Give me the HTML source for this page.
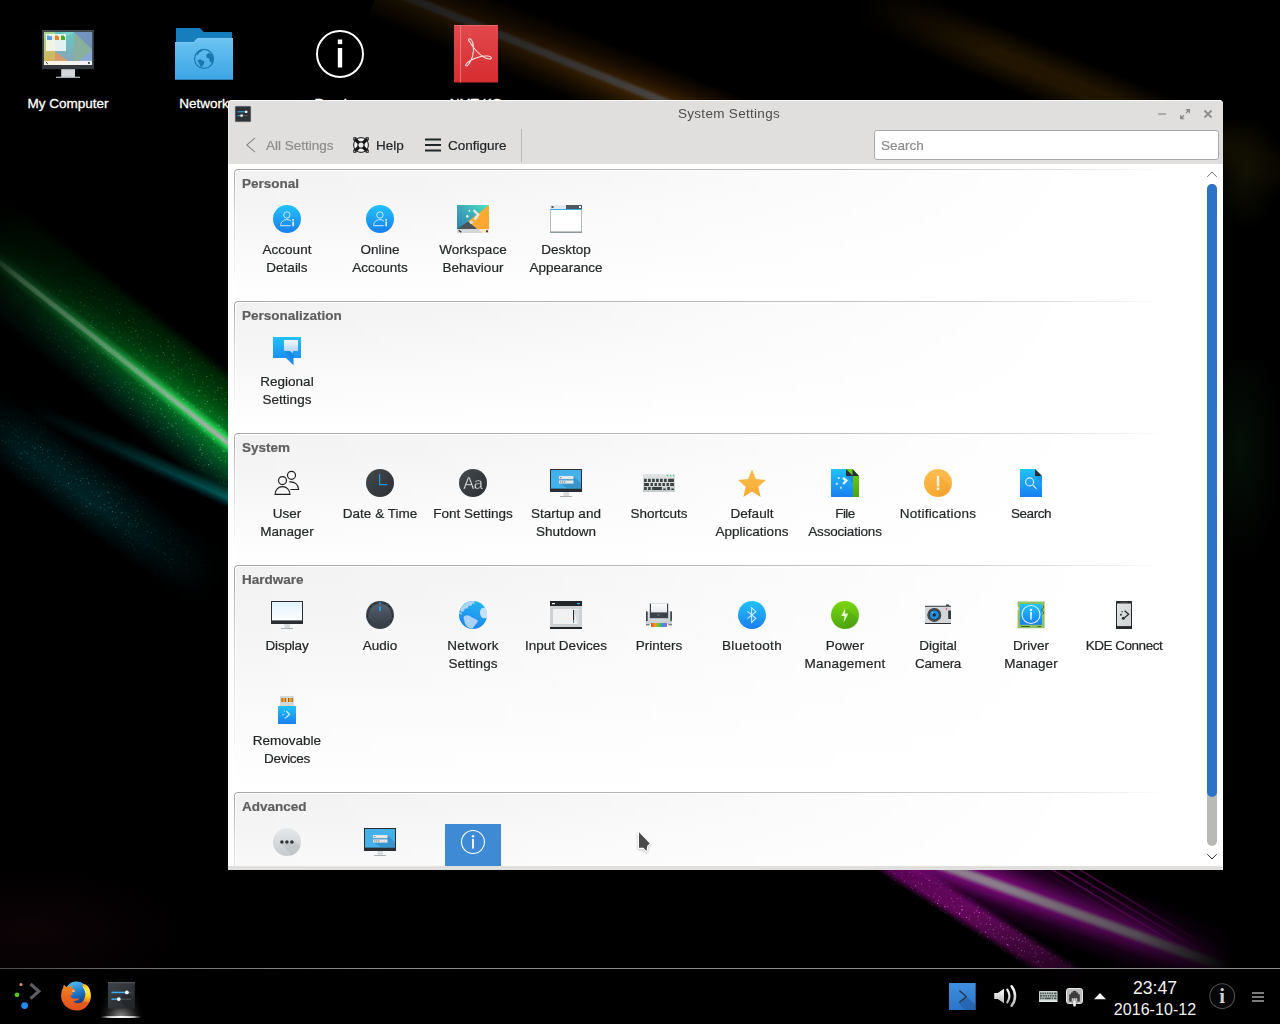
<!DOCTYPE html>
<html lang="en">
<head>
<meta charset="utf-8">
<title>System Settings</title>
<style>
*{box-sizing:border-box;margin:0;padding:0}
html,body{width:1280px;height:1024px;overflow:hidden;background:#000}
body{position:relative;font-family:"Liberation Sans",sans-serif;font-size:13.5px;color:#232627;-webkit-text-stroke:.2px}
.abs{position:absolute}
svg{display:block;overflow:visible}
#wall{position:absolute;left:0;top:0;width:1280px;height:1024px;overflow:hidden;background:#000}
.stk{position:absolute;transform-origin:0 50%}
/* desktop icons */
.dlabel{position:absolute;width:140px;text-align:center;color:#fff;font-size:13.5px;line-height:18px;text-shadow:0 1px 2px #000,0 0 3px #000;white-space:nowrap;-webkit-text-stroke:.3px #fff}
.dicon{position:absolute}
/* window */
#win{will-change:transform;position:absolute;left:228px;top:100px;width:995px;height:770px;background:#fff;border-radius:4px 4px 0 0;overflow:hidden}
#chrome{position:absolute;left:0;top:0;width:995px;height:64px;background:#e0dfde;border-radius:4px 4px 0 0;box-shadow:inset 0 1px 0 #fafafa,inset 1px 0 0 #ececeb}
#title{position:absolute;left:0;top:5px;width:1002px;text-align:center;font-size:13.5px;line-height:18px;color:#4d4d4d;letter-spacing:.3px;-webkit-text-stroke:0}
.tb{position:absolute;top:37px;font-size:13.5px;line-height:18px;color:#232627;white-space:nowrap}
#search{position:absolute;left:646px;top:30px;width:345px;height:30px;background:#fff;border:1px solid #a9a8a7;border-radius:3px;font-size:13.5px;line-height:30px;padding-left:6px;color:#8b8b8b}
#content{position:absolute;left:1px;top:64px;width:993px;height:702px;background:#fff;overflow:hidden}
#bot{position:absolute;left:0;top:766px;width:994px;height:4px;background:#e0dfde}
.grp{position:absolute;left:5px;width:968px}
.grp i{position:absolute;left:2px;top:2px;right:0;bottom:0;border-radius:2px 0 0 0;background:linear-gradient(180deg,#f1f1f1 0,#f7f7f7 45%,#fff 100%);-webkit-mask-image:linear-gradient(100deg,#000 0,rgba(0,0,0,.72) 28%,rgba(0,0,0,.3) 58%,transparent 86%);mask-image:linear-gradient(100deg,#000 0,rgba(0,0,0,.72) 28%,rgba(0,0,0,.3) 58%,transparent 86%)}
.grp:before{content:"";position:absolute;left:0;top:0;right:0;bottom:0;border-radius:4px 4px 0 0;border:1px solid #a6a6a6;border-bottom:0;border-right:0;-webkit-mask-image:linear-gradient(180deg,#000 0,rgba(0,0,0,.5) 35%,transparent 90%),linear-gradient(90deg,#000 0,#000 40%,transparent 96%);-webkit-mask-composite:source-in;mask-image:linear-gradient(180deg,#000 0,rgba(0,0,0,.5) 35%,transparent 90%),linear-gradient(90deg,#000 0,#000 40%,transparent 96%);mask-composite:intersect}
.grp:after{content:"";position:absolute;left:3px;top:0;right:0;height:1px;background:linear-gradient(90deg,#a6a6a6 0,#b2b2b2 30%,rgba(190,190,190,.75) 60%,rgba(200,200,200,0) 97%)}
.grp h3{position:absolute;left:8px;top:6px;font-size:13.5px;line-height:18px;font-weight:bold;color:#5f5f5f;white-space:nowrap}
.it{position:absolute;width:110px;height:80px;text-align:center;font-size:13.5px;line-height:18px;color:#232627}
.it svg{position:absolute;left:39px;top:0;width:32px;height:32px}
.it b{font-weight:normal}
.it span{position:absolute;left:0;top:38px;width:110px;display:block}
.it.sel:before{content:"";position:absolute;left:27px;top:-2px;width:56px;height:60px;background:#3f8ad5}
/* panel */
#panel{position:absolute;left:0;top:968px;width:1280px;height:56px;background:rgba(0,0,0,.92);border-top:1px solid transparent}
#panel:before{content:"";position:absolute;left:0;top:-1px;width:1280px;height:1px;background:linear-gradient(90deg,#4a4a4a 0,#6e6e6e 10%,#8c8c8c 30%,#8e8e8e 100%)}
</style>
</head>
<body>
<svg width="0" height="0" style="position:absolute"><defs>
<linearGradient id="gBlue" x1="0" y1="0" x2="0" y2="1"><stop offset="0" stop-color="#21c2f9"/><stop offset="1" stop-color="#1a7ff0"/></linearGradient>
<linearGradient id="gPale" x1="0" y1="0" x2="0" y2="1"><stop offset="0" stop-color="#f4f9ff"/><stop offset="1" stop-color="#a9cdf8"/></linearGradient>
<linearGradient id="gDark" x1="0" y1="0" x2="1" y2="1"><stop offset="0" stop-color="#454a4f"/><stop offset="1" stop-color="#2b2f33"/></linearGradient>
<linearGradient id="gOrange" x1="0" y1="0" x2="0" y2="1"><stop offset="0" stop-color="#fdbe52"/><stop offset="1" stop-color="#f9a830"/></linearGradient>
<linearGradient id="gOr2" x1="0" y1="0" x2="1" y2="1"><stop offset="0" stop-color="#fbb13a"/><stop offset="1" stop-color="#fda52c"/></linearGradient>
<linearGradient id="gTeal" x1="0" y1="1" x2="1" y2="0"><stop offset="0" stop-color="#2f7fb4"/><stop offset=".5" stop-color="#3fa9b8"/><stop offset="1" stop-color="#49e6c4"/></linearGradient>
<linearGradient id="gGreen" x1="0" y1="0" x2="0" y2="1"><stop offset="0" stop-color="#7bd80e"/><stop offset="1" stop-color="#4ea611"/></linearGradient>
<linearGradient id="gGreen2" x1="0" y1="0" x2="0" y2="1"><stop offset="0" stop-color="#72d20d"/><stop offset="1" stop-color="#48a611"/></linearGradient>
<linearGradient id="gGray" x1="0" y1="0" x2="0" y2="1"><stop offset="0" stop-color="#e6e9ea"/><stop offset="1" stop-color="#c6cbce"/></linearGradient>
<linearGradient id="gKb" x1="0" y1="0" x2="0" y2="1"><stop offset="0" stop-color="#e3e6e7"/><stop offset="1" stop-color="#c3c9cb"/></linearGradient>
<linearGradient id="gScreen" x1="0" y1="0" x2="0" y2="1"><stop offset="0" stop-color="#e3f3fc"/><stop offset="1" stop-color="#fdfeff"/></linearGradient>
<linearGradient id="gKnob" x1="0" y1="0" x2="0" y2="1"><stop offset="0" stop-color="#56606b"/><stop offset="1" stop-color="#353c44"/></linearGradient>
<linearGradient id="gGlobe" x1="0.7" y1="0" x2="0.3" y2="1"><stop offset="0" stop-color="#23b4ef"/><stop offset="1" stop-color="#1b83f0"/></linearGradient>
<linearGradient id="gPaper" x1="0" y1="0" x2="0" y2="1"><stop offset="0" stop-color="#fff"/><stop offset="1" stop-color="#e4e9ed"/></linearGradient>
<linearGradient id="gPhone" x1="0" y1="0" x2="1" y2="1"><stop offset="0" stop-color="#e2e4e5"/><stop offset="1" stop-color="#cfd2d3"/></linearGradient>
<linearGradient id="gRainbow" x1="0" y1="0" x2="1" y2="0"><stop offset="0" stop-color="#e8452c"/><stop offset=".25" stop-color="#f0a020"/><stop offset=".5" stop-color="#5ac43a"/><stop offset=".75" stop-color="#3d8fe0"/><stop offset="1" stop-color="#a15fd0"/></linearGradient>
<linearGradient id="gFolder" x1="0" y1="0" x2="0" y2="1"><stop offset="0" stop-color="#6cc4f2"/><stop offset="1" stop-color="#3da5e4"/></linearGradient>
<linearGradient id="gRed" x1="0" y1="0" x2="0" y2="1"><stop offset="0" stop-color="#e2494c"/><stop offset="1" stop-color="#d62c30"/></linearGradient>
<filter id="spk" x="0" y="0" width="100%" height="100%" color-interpolation-filters="sRGB"><feTurbulence type="fractalNoise" baseFrequency=".75" numOctaves="1" seed="7" result="n"/><feColorMatrix in="n" type="matrix" values="0 0 0 0 1 0 0 0 0 1 0 0 0 0 1 11 0 0 0 -7.3" result="d"/><feComposite in="SourceGraphic" in2="d" operator="in"/></filter>
</defs></svg>
<div id="wall">
<!-- green -->
<div class="stk" style="left:-60px;top:135px;width:420px;height:160px;transform:rotate(38.3deg);background:linear-gradient(180deg,rgba(0,40,5,0) 14%,rgba(0,72,12,.55) 20%,rgba(0,98,20,.74) 34%,rgba(4,135,34,.86) 44%,rgba(40,225,90,1) 48.4%,rgba(40,225,90,1) 51.6%,rgba(4,135,44,.86) 56%,rgba(0,98,48,.7) 65%,rgba(0,70,46,.45) 73%,rgba(0,40,30,0) 81%);-webkit-mask-image:linear-gradient(90deg,transparent 8%,rgba(0,0,0,.16) 18%,rgba(0,0,0,.32) 33%,rgba(0,0,0,.55) 50%,rgba(0,0,0,.85) 70%,#000 87%);mask-image:linear-gradient(90deg,transparent 8%,rgba(0,0,0,.16) 18%,rgba(0,0,0,.32) 33%,rgba(0,0,0,.55) 50%,rgba(0,0,0,.85) 70%,#000 87%)"></div>
<div class="stk" style="left:-60px;top:211.5px;width:420px;height:7px;transform:rotate(38.3deg);background:linear-gradient(180deg,rgba(150,160,150,0),#9aa59a 28%,#a8b3a8 50%,#9aa59a 72%,rgba(150,160,150,0));-webkit-mask-image:linear-gradient(90deg,transparent 14%,rgba(0,0,0,.28) 24%,rgba(0,0,0,.5) 55%,#000 87%);mask-image:linear-gradient(90deg,transparent 14%,rgba(0,0,0,.28) 24%,rgba(0,0,0,.5) 55%,#000 87%)"></div>
<div class="stk spk-green" style="left:-60px;top:135px;width:420px;height:160px;transform:rotate(38.3deg);filter:url(#spk);background:linear-gradient(180deg,rgba(60,220,110,0) 16%,rgba(70,230,120,.75) 26%,rgba(110,255,150,.9) 50%,rgba(70,230,150,.75) 68%,rgba(60,220,140,0) 79%);-webkit-mask-image:linear-gradient(90deg,transparent 16%,rgba(0,0,0,.12) 30%,rgba(0,0,0,.45) 52%,#000 88%);mask-image:linear-gradient(90deg,transparent 16%,rgba(0,0,0,.12) 30%,rgba(0,0,0,.45) 52%,#000 88%)"></div>
<!-- thin teal -->
<div class="stk" style="left:10px;top:390px;width:300px;height:20px;transform:rotate(24deg);background:linear-gradient(180deg,rgba(0,60,60,0),rgba(0,85,82,.7) 30%,rgba(0,105,105,.85) 55%,rgba(0,70,80,.5) 80%,rgba(0,60,70,0));-webkit-mask-image:linear-gradient(90deg,transparent 5%,rgba(0,0,0,.3) 35%,#000 80%);mask-image:linear-gradient(90deg,transparent 5%,rgba(0,0,0,.3) 35%,#000 80%)"></div>
<!-- broad teal -->
<div class="stk" style="left:-40px;top:366px;width:330px;height:66px;transform:rotate(36deg);background:linear-gradient(180deg,rgba(0,50,55,0),rgba(0,58,62,.5) 40%,rgba(0,64,70,.55) 60%,rgba(0,50,60,0));-webkit-mask-image:linear-gradient(90deg,transparent 3%,rgba(0,0,0,.8) 25%,#000 50%,transparent 96%);mask-image:linear-gradient(90deg,transparent 3%,rgba(0,0,0,.8) 25%,#000 50%,transparent 96%)"></div>
<div class="stk" style="left:-40px;top:366px;width:330px;height:66px;transform:rotate(36deg);filter:url(#spk);background:linear-gradient(180deg,rgba(0,150,150,0),rgba(40,170,170,.7) 40%,rgba(40,170,175,.7) 60%,rgba(0,150,150,0));-webkit-mask-image:linear-gradient(90deg,transparent 3%,rgba(0,0,0,.8) 25%,#000 50%,transparent 96%);mask-image:linear-gradient(90deg,transparent 3%,rgba(0,0,0,.8) 25%,#000 50%,transparent 96%)"></div>
<!-- orange 1 -->
<div class="stk" style="left:380px;top:-51px;width:440px;height:74px;transform:rotate(22.1deg);background:linear-gradient(180deg,rgba(90,45,0,0) 4%,rgba(80,40,4,.38) 26%,rgba(100,55,6,.6) 42%,rgba(90,85,80,.9) 47.5%,rgba(90,85,80,.9) 53%,rgba(108,64,6,.62) 58%,rgba(90,50,4,.38) 76%,rgba(90,50,0,0) 96%);-webkit-mask-image:linear-gradient(90deg,rgba(0,0,0,.35) 0,rgba(0,0,0,.55) 35%,#000 80%);mask-image:linear-gradient(90deg,rgba(0,0,0,.35) 0,rgba(0,0,0,.55) 35%,#000 80%)"></div>
<!-- orange 2 -->
<div class="stk" style="left:850px;top:-34px;width:520px;height:56px;transform:rotate(22.4deg);background:linear-gradient(180deg,rgba(90,55,0,0),rgba(80,50,4,.42) 40%,rgba(80,50,4,.42) 60%,rgba(90,55,0,0));-webkit-mask-image:linear-gradient(90deg,transparent 2%,#000 30%,#000 55%,rgba(0,0,0,.3) 85%);mask-image:linear-gradient(90deg,transparent 2%,#000 30%,#000 55%,rgba(0,0,0,.3) 85%)"></div>
<!-- right dim glows -->
<div class="abs" style="left:1223px;top:120px;width:57px;height:110px;background:radial-gradient(ellipse at 40% 45%,rgba(20,19,3,.9),rgba(20,18,0,0) 70%)"></div>
<div class="abs" style="left:1223px;top:360px;width:57px;height:200px;background:radial-gradient(ellipse at 30% 45%,rgba(6,16,8,.95),rgba(5,15,8,0) 75%)"></div>
<div class="abs" style="left:-60px;top:860px;width:260px;height:130px;background:radial-gradient(ellipse at 35% 55%,rgba(20,4,8,.6),rgba(10,0,4,0) 70%)"></div>
<!-- magenta left band -->
<div class="stk" style="left:864px;top:830px;width:300px;height:30px;transform:rotate(32.7deg);background:linear-gradient(180deg,rgba(110,0,100,0),rgba(120,12,110,.9) 25%,rgba(110,8,100,.85) 75%,rgba(110,0,100,0));-webkit-mask-image:linear-gradient(90deg,#000 40%,rgba(0,0,0,.5) 70%,transparent 98%);mask-image:linear-gradient(90deg,#000 40%,rgba(0,0,0,.5) 70%,transparent 98%)"></div>
<div class="stk" style="left:864px;top:830px;width:300px;height:30px;transform:rotate(32.7deg);filter:url(#spk);background:linear-gradient(180deg,rgba(255,150,250,0),rgba(255,170,250,.85) 25%,rgba(255,170,250,.85) 75%,rgba(255,150,250,0));-webkit-mask-image:linear-gradient(90deg,#000 40%,rgba(0,0,0,.5) 70%,transparent 98%);mask-image:linear-gradient(90deg,#000 40%,rgba(0,0,0,.5) 70%,transparent 98%)"></div>
<!-- magenta main -->
<div class="stk" style="left:900px;top:805px;width:360px;height:90px;transform:rotate(19.8deg);background:linear-gradient(180deg,rgba(80,0,80,0) 5%,rgba(80,0,80,.45) 25%,rgba(130,10,130,.85) 42%,#867686 47%,#8e7e8e 50%,#867686 53%,rgba(130,10,130,.85) 58%,rgba(80,0,80,.45) 72%,rgba(80,0,80,0) 90%);-webkit-mask-image:linear-gradient(90deg,#000 30%,rgba(0,0,0,.6) 70%,transparent 98%);mask-image:linear-gradient(90deg,#000 30%,rgba(0,0,0,.6) 70%,transparent 98%)"></div>
<!-- magenta thin lines -->
<div class="stk" style="left:1040px;top:846px;width:200px;height:22px;transform:rotate(31deg);background:repeating-linear-gradient(180deg,rgba(120,10,110,0) 0,rgba(120,10,110,.7) 1.5px,rgba(120,10,110,0) 3px,rgba(0,0,0,0) 7px);-webkit-mask-image:linear-gradient(90deg,#000 30%,transparent 95%);mask-image:linear-gradient(90deg,#000 30%,transparent 95%)"></div>
</div>
<div id="desk">
<!-- My Computer -->
<svg class="dicon" style="left:42px;top:30px;width:52px;height:49px" viewBox="0 0 52 49"><defs><linearGradient id="mc1" x1="0" y1="0" x2="0" y2="1"><stop offset="0" stop-color="#a4d696"/><stop offset="1" stop-color="#d6b45a"/></linearGradient><linearGradient id="mc2" x1="0" y1="0" x2="0" y2="1"><stop offset="0" stop-color="#66c8c2"/><stop offset="1" stop-color="#82a6ba"/></linearGradient><linearGradient id="mc3" x1="0" y1="0" x2="1" y2="0"><stop offset="0" stop-color="#fff6e2"/><stop offset="1" stop-color="#eef0fa"/></linearGradient></defs>
<rect x="0" y="0" width="52" height="39.2" fill="#33383d"/><rect x="0" y="0" width="52" height="1.2" fill="#464b50"/>
<rect x="1.9" y="1.9" width="11.1" height="29" fill="url(#mc1)"/><rect x="13" y="1.9" width="19" height="29" fill="url(#mc2)"/><rect x="32" y="1.9" width="18.1" height="29" fill="#88b09c"/>
<path d="M13 21l13 9.9H13z" fill="#d69a6a"/><path d="M32 1.9h18.1v17.6z" fill="#7494bc"/><path d="M50.1 19.5v11.4H37z" fill="#88a8d4"/><path d="M32 1.9l-6 4.6-6-4.6z" fill="#7fd8d0" opacity=".6"/>
<rect x="4" y="4" width="20" height="17" fill="#fff" opacity=".8"/>
<path d="M5 5.5h2l.6.7H10V10H5z" fill="#5c9ce0"/><path d="M13 5.5h2.6L17 7v3h-4z" fill="#f88030"/><path d="M19 5.5h2.6L23 7v3h-4z" fill="#48b020"/>
<rect x="1.9" y="30.9" width="48.2" height="4.1" fill="url(#mc3)"/><path d="M3.8 32l2 1.9" stroke="#2d3236" stroke-width="1"/><rect x="46" y="32" width="1.8" height="1.8" fill="#3a3f44"/>
<rect x="19.2" y="39.2" width="13.8" height="7.8" fill="#d3d7d9"/><rect x="14" y="46.7" width="24" height="1.3" fill="#aab0b4"/></svg>
<div class="dlabel" style="left:-2px;top:95px">My Computer</div>
<!-- Network -->
<svg class="dicon" style="left:175px;top:28px;width:58px;height:52px" viewBox="0 0 58 52"><path d="M1 0H25L28.75 4H57V18H1z" fill="#167ebc"/><path d="M0 14H18.75L22.5 10.1H58V51.8H0z" fill="url(#gFolder)"/><path d="M0 14.5V14H18.75L22.5 10.1H58v.6H22.7L18.95 14.5z" fill="#8ad0f6" opacity=".8"/>
<circle cx="29" cy="30.9" r="9.5" fill="none" stroke="#1a78ae" stroke-width="1.2"/><g fill="#1a78ae"><path d="M20.8 26C22.4 23 25 21.5 28 21.2L26.6 23.6 24.2 24.4 22.6 27.2z"/><path d="M22.4 32.4L25 31.2 29.6 33.6 28.6 36.6 26 39.8 24.4 36z"/><path d="M31.4 26.6L34 24.4 37.4 26.8C38.8 30 38.6 33 37 35.6L34.6 33 34 30.6 31.4 29.6z"/></g></svg>
<div class="dlabel" style="left:134px;top:95px">Network</div>
<!-- Readme -->
<svg class="dicon" style="left:314px;top:28px;width:52px;height:52px" viewBox="0 0 52 52"><circle cx="26" cy="26" r="23" fill="none" stroke="#fff" stroke-width="2"/><rect x="23.8" y="11.5" width="4.4" height="4.6" fill="#fff"/><rect x="23.8" y="20" width="4.4" height="19.5" fill="#fff"/></svg>
<div class="dlabel" style="left:270px;top:95px">Readme</div>
<!-- pdf -->
<svg class="dicon" style="left:454px;top:25px;width:44px;height:58px" viewBox="0 0 44 58"><rect x="0" y="0" width="44" height="57.5" rx="1" fill="url(#gRed)"/><rect x="6" y="0" width="1" height="57.5" fill="#f08c8e" opacity=".7"/>
<path d="M16 17c-2.5-1.5-1.5-4.5 1-2.5 2.5 2.5 3.5 10 1.5 17-1.5 5-4.5 9.5-6 9.5-2 0-.5-3 4-5.5 5-2.8 12-5 17.5-4.5 4 .4 4.5 2.8 1.5 3-4 .2-11.5-5.5-16-11.5-1.5-2-2.8-4-3.5-5.5z" fill="none" stroke="#fbe4e4" stroke-width="1.05"/><rect x="0" y="0" width="44" height=".8" fill="#f07a7c" opacity=".8"/></svg>
<div class="dlabel" style="left:406px;top:95px">NMT-KG</div>
</div>
<div id="win"><div id="chrome">
<svg class="abs" style="left:7px;top:6px;width:16px;height:16px" viewBox="0 0 16 16"><rect x=".4" y=".4" width="15.2" height="15.2" rx=".5" fill="#2d3237" stroke="#454a4f" stroke-width=".6"/><rect x="2.5" y="5.3" width="9" height="1" fill="#3daee9"/><rect x="10" y="4.7" width="2.4" height="2.2" fill="#f2f2f2"/><rect x="2.5" y="9.1" width="4" height="1" fill="#3daee9"/><rect x="6.5" y="9.1" width="6" height="1" fill="#555b60"/><rect x="5.4" y="8.5" width="2.4" height="2.2" fill="#f2f2f2"/></svg>
<div id="title">System Settings</div>
<svg class="abs" style="left:17px;top:37px;width:12px;height:16px" viewBox="0 0 12 16"><path d="M10 .8L1.8 8l8.2 7.2" fill="none" stroke="#8a8a8a" stroke-width="1.1"/></svg>
<div class="tb" style="left:38px;color:#8e8d8c">All Settings</div>
<svg class="abs" style="left:125px;top:37px;width:16px;height:16px" viewBox="0 0 16 16"><circle cx="8" cy="8" r="7.4" fill="#f1f1f1" stroke="#151515" stroke-width="1"/><path d="M1.8 1.8l12.4 12.4M14.2 1.8L1.8 14.2" stroke="#151515" stroke-width="3.3"/><path d="M.3.3h3.4L.3 3.7zM15.7.3h-3.4l3.4 3.4zM.3 15.7h3.4L.3 12.3zM15.7 15.7h-3.4l3.4-3.4z" fill="#151515"/><circle cx="8" cy="8" r="3.1" fill="#e9e9e9" stroke="#151515" stroke-width="1.1"/><g fill="#eee"><circle cx="1.7" cy="1.7" r=".55"/><circle cx="14.3" cy="1.7" r=".55"/><circle cx="1.7" cy="14.3" r=".55"/><circle cx="14.3" cy="14.3" r=".55"/></g></svg>
<div class="tb" style="left:148px">Help</div>
<svg class="abs" style="left:197px;top:38px;width:16px;height:14px" viewBox="0 0 16 14"><path d="M0 1.5h16M0 7h16M0 12.5h16" stroke="#232627" stroke-width="2"/></svg>
<div class="tb" style="left:220px">Configure</div>
<div class="abs" style="left:293px;top:29px;width:1px;height:33px;background:#bab9b8"></div>
<div id="search">Search</div>
<svg class="abs" style="left:928px;top:8px;width:60px;height:12px" viewBox="0 0 60 12"><g stroke="#8c8c8c" fill="none"><path d="M2 6h8" stroke-width="1.3"/><path d="M25.5 9.7l2.5-2.5M30 5l2.5-2.5" stroke-width="1.3"/><path d="M48.5 2.5l7 7M55.5 2.5l-7 7" stroke-width="1.8"/></g><path d="M24 11.2V6.5l4.7 4.7zM34 1v4.7L29.3 1z" fill="#8c8c8c"/></svg>
</div>
<div id="content"><div class="grp" style="top:5px;height:130px"><i></i><h3>Personal</h3>
<div class="it" style="left:-2px;top:34px"><svg viewBox="0 0 32 32" ><circle cx="16" cy="16" r="14" fill="url(#gBlue)"/>
<g fill="none" stroke="#cfe9fd" stroke-width="1"><circle cx="15.9" cy="12" r="3.2"/>
<path d="M9.6 22.7C9.6 19 12.4 16.6 15.9 16.6 17.6 16.6 19 17.2 20 18.3M9.6 22.7H19.6"/></g>
<path fill="#d6ecfd" d="M21.3 16h1.7v1.7h-1.7zM21.3 18.6h1.7v4.6h-1.7z"/></svg><span>Account<br>Details</span></div>
<div class="it" style="left:91px;top:34px"><svg viewBox="0 0 32 32" ><circle cx="16" cy="16" r="14" fill="url(#gBlue)"/>
<g fill="none" stroke="#cfe9fd" stroke-width="1"><circle cx="15.9" cy="12" r="3.2"/>
<path d="M9.6 22.7C9.6 19 12.4 16.6 15.9 16.6 17.6 16.6 19 17.2 20 18.3M9.6 22.7H19.6"/></g>
<path fill="#d6ecfd" d="M21.3 16h1.7v1.7h-1.7zM21.3 18.6h1.7v4.6h-1.7z"/></svg><span>Online<br>Accounts</span></div>
<div class="it" style="left:184px;top:34px"><svg viewBox="0 0 32 32" ><rect x="0" y="2" width="32" height="24" fill="url(#gTeal)"/>
<path d="M32 2V26H20L11 18.6z" fill="url(#gOr2)"/>
<path d="M0 26L11 18.6 20 26z" fill="#4a5357"/>
<path d="M0 26h22l4 4H0z" fill="#d3d7d9"/><path d="M22 26h10v4h-6z" fill="#fde7c6"/>
<path d="M1.8 27.2l2.4 2" stroke="#2d3236" stroke-width="1.2"/><rect x="29" y="27.3" width="2" height="2" fill="#3a3f44"/>
<path d="M16.6 7.2l4.6 4.4-3.6 5.2" fill="none" stroke="#e9f3f6" stroke-width="2.4" opacity=".9"/>
<circle cx="12.4" cy="7.8" r="0.9" fill="#eaf6f8"/><circle cx="10.3" cy="13.4" r="1.3" fill="#dff1f5"/><circle cx="14.3" cy="19.3" r="1.7" fill="#d6dfe6"/></svg><span>Workspace<br>Behaviour</span></div>
<div class="it" style="left:277px;top:34px"><svg viewBox="0 0 32 32" ><rect x="0" y="2" width="32" height="28" fill="#b4babe"/>
<rect x="0" y="2" width="16" height="4" fill="#e6e8e9"/><rect x="16" y="2" width="16" height="4" fill="#4f5860"/>
<rect x="1.5" y="3" width="2" height="2" fill="#4f5860"/><rect x="29" y="3" width="2" height="2" fill="#f4f5f5"/>
<rect x="0" y="6" width="32" height="1" fill="#3daee9"/>
<rect x="1" y="7" width="30" height="21.6" fill="#fff"/><rect x="0" y="28.6" width="32" height="1.4" fill="#8f989d"/></svg><span>Desktop<br>Appearance</span></div>
</div>
<div class="grp" style="top:137px;height:130px"><i></i><h3>Personalization</h3>
<div class="it" style="left:-2px;top:34px"><svg viewBox="0 0 32 32" ><path d="M2 2h28v21h-7.5v7.2L15 23H2z" fill="url(#gBlue)"/>
<path d="M13 16.4l8 8 1.5-1.4V16z" fill="#1573d6" opacity=".45"/>
<path d="M13 5h14v11h-4.6l-.8 2.6L19 16h-6z" fill="url(#gPale)"/></svg><span>Regional<br>Settings</span></div>
</div>
<div class="grp" style="top:269px;height:130px"><i></i><h3>System</h3>
<div class="it" style="left:-2px;top:34px"><svg viewBox="0 0 32 32" ><g fill="none" stroke="#1c1e20" stroke-width="1.15"><circle cx="20.5" cy="8.3" r="4"/>
<path d="M18.3 14.9C23.6 14.2 27.6 17.8 27.6 22.5H19.4"/>
<circle cx="11.5" cy="13.6" r="4"/><path d="M4.1 27.4C4.1 23 7.2 19.6 11.5 19.6S18.9 23 18.9 27.4z"/></g></svg><span>User<br>Manager</span></div>
<div class="it" style="left:91px;top:34px"><svg viewBox="0 0 32 32" ><circle cx="16" cy="16" r="14" fill="url(#gDark)"/>
<path d="M15.6 7v10.6h7.6" fill="none" stroke="#1d99f3" stroke-width="1.2"/></svg><span>Date &amp; Time</span></div>
<div class="it" style="left:184px;top:34px"><svg viewBox="0 0 32 32" ><circle cx="16" cy="16" r="14" fill="url(#gDark)"/>
<text x="15.8" y="21.8" text-anchor="middle" font-family="Liberation Sans, sans-serif" font-size="16.5" fill="#e6e6e6" letter-spacing="-.6" stroke="#3a3f44" stroke-width=".35">Aa</text></svg><span>Font Settings</span></div>
<div class="it" style="left:277px;top:34px"><svg viewBox="0 0 32 32" ><rect x="0" y="2" width="32" height="23" fill="#2a2e32"/>
<rect x="1" y="3" width="30" height="18.6" fill="#45b1ea"/>
<path d="M9 9l14.5 0L31 16.5v5.1H18.2L9 16.6z" fill="#2c7fb3" opacity=".55"/>
<rect x="9" y="9" width="14.5" height="3.2" fill="#e4e6e7"/><rect x="9" y="13.4" width="14.5" height="3.2" fill="#e4e6e7"/>
<rect x="10.3" y="10.1" width="1" height="1" fill="#4a5054"/><rect x="10.3" y="14.5" width="1" height="1" fill="#4a5054"/><rect x="12.3" y="14.5" width="1" height="1" fill="#4a5054"/><rect x="14.3" y="14.5" width="1" height="1" fill="#4a5054"/>
<rect x="13.5" y="25" width="5.5" height="4" fill="#d5dadc"/><rect x="10" y="29" width="12" height="1" fill="#a9b1b5"/></svg><span>Startup and<br>Shutdown</span></div>
<div class="it" style="left:370px;top:34px"><svg viewBox="0 0 32 32" ><rect x="0" y="7" width="32" height="18" fill="url(#gKb)"/>
<g fill="#39413f"><path d="M1.1 11.8h2.6v3.2H1.1zM5.1 11.8h2.6v3.2H5.1zM9.1 11.8h2.6v3.2H9.1zM13.1 11.8h2.6v3.2h-2.6zM17.1 11.8h2.6v3.2h-2.6zM21.1 11.8h2.6v3.2h-2.6zM25.1 11.8h5.8v3.2h-5.8z"/>
<path d="M1.1 15.9h4.8v3.2H1.1zM7.5 15.9h2.4v3.2H7.5zM11.5 15.9h2.4v3.2h-2.4zM15.5 15.9h2.4v3.2h-2.4zM19.5 15.9h2.4v3.2h-2.4zM23.5 15.9h2.4v3.2h-2.4zM27.2 15.9H30.9v3.2h-3.7z"/>
<path d="M1.1 20h2.6v3.1H1.1zM5.1 20h2.6v3.1H5.1zM9.1 20h9.8v3.1H9.1zM20.2 21.5h2.6v1.6h-2.6zM24.3 20h2.6v3.1h-2.6zM28.3 21.5H30.9v1.6h-2.6z"/></g>
<g fill="#2ecc71"><rect x="24" y="8" width="1.2" height="1.2"/><rect x="27" y="8" width="1.2" height="1.2"/><rect x="30" y="8" width="1.2" height="1.2"/></g></svg><span>Shortcuts</span></div>
<div class="it" style="left:463px;top:34px"><svg viewBox="0 0 32 32" ><polygon points="16.00,2.96 19.88,12.32 29.98,13.12 22.28,19.7 24.64,29.55 16.00,24.26 7.36,29.55 9.72,19.7 2.02,13.12 12.12,12.32" fill="url(#gOrange)" transform="translate(0 17.66) scale(1 1.04) translate(0 -17.66)"/></svg><span>Default<br>Applications</span></div>
<div class="it" style="left:556px;top:34px"><svg viewBox="0 0 32 32" ><path d="M17 2h6.5L30 9v21h-7V9z" fill="url(#gGreen2)"/>
<path d="M2 2h15l7 7v21H2z" fill="url(#gBlue)"/>
<path d="M17 9l7 7V9z" fill="#155fb5" opacity=".35"/>
<path d="M17 2v7h7z" fill="#2a2e32"/><path d="M23.5 2v7H30z" fill="#2a2e32"/>
<path d="M14 10.8l3.4 2.9-3.2 3.4" fill="none" stroke="#eef7fe" stroke-width="2.2"/>
<rect x="8.8" y="10.2" width="1.8" height="1.8" fill="#e4f2fd"/><rect x="6.8" y="15.8" width="2" height="2" fill="#cfe7fb"/><rect x="10.9" y="19.8" width="2" height="2" fill="#bcdcf9"/></svg><span><b style="letter-spacing:-.55px">File</b><br><b style="letter-spacing:-.2px">Associations</b></span></div>
<div class="it" style="left:649px;top:34px"><svg viewBox="0 0 32 32" ><circle cx="16" cy="16" r="14" fill="url(#gOrange)"/>
<path d="M17.3 8.8L29 20.5A14 14 0 0 1 18.5 29.7L14.8 23.3z" fill="#e59a2a" opacity=".28"/>
<rect x="14.8" y="8.8" width="2.5" height="10.6" fill="#fff3dc"/><rect x="14.8" y="20.6" width="2.5" height="2.6" fill="#fff3dc"/></svg><span><b style="letter-spacing:.23px">Notifications</b></span></div>
<div class="it" style="left:742px;top:34px"><svg viewBox="0 0 32 32" ><path d="M5 2h15l7 7v21H5z" fill="url(#gBlue)"/><path d="M20 9l7 7V9z" fill="#155fb5" opacity=".3"/>
<path d="M20 2v7h7z" fill="#2a2e32"/>
<circle cx="14.6" cy="14.9" r="4" fill="none" stroke="#dff0fd" stroke-width="1.1"/><path d="M17.5 17.8l4.2 4" stroke="#dff0fd" stroke-width="1.1"/></svg><span><b style="letter-spacing:-.5px">Search</b></span></div>
</div>
<div class="grp" style="top:401px;height:225px"><i></i><h3>Hardware</h3>
<div class="it" style="left:-2px;top:34px"><svg viewBox="0 0 32 32" ><rect x="0" y="2" width="32" height="23" fill="#2a2e32"/>
<rect x="1" y="3" width="30" height="18.4" fill="url(#gScreen)"/>
<rect x="13.5" y="25" width="5.5" height="4" fill="#d5dadc"/><rect x="10" y="29" width="12" height="1" fill="#a9b1b5"/></svg><span><b style="letter-spacing:-.2px">Display</b></span></div>
<div class="it" style="left:91px;top:34px"><svg viewBox="0 0 32 32" ><circle cx="16" cy="16" r="14" fill="#39424b"/><circle cx="5.09" cy="22.3" r=".7" fill="#1e2328"/><circle cx="3.47" cy="17.32" r=".7" fill="#1e2328"/><circle cx="4.02" cy="12.11" r=".7" fill="#1e2328"/><circle cx="6.64" cy="7.57" r=".7" fill="#1e2328"/><circle cx="10.88" cy="4.49" r=".7" fill="#1e2328"/><circle cx="21.12" cy="4.49" r=".7" fill="#1e2328"/><circle cx="25.36" cy="7.57" r=".7" fill="#1e2328"/><circle cx="27.98" cy="12.11" r=".7" fill="#1e2328"/><circle cx="28.53" cy="17.32" r=".7" fill="#1e2328"/><circle cx="26.91" cy="22.3" r=".7" fill="#1e2328"/>
<circle cx="16" cy="16.3" r="11.3" fill="url(#gKnob)"/>
<circle cx="16" cy="4.2" r="1" fill="#1d99f3"/><rect x="15" y="7" width="2" height="5" rx=".6" fill="#1d99f3"/></svg><span>Audio</span></div>
<div class="it" style="left:184px;top:34px"><svg viewBox="0 0 32 32" ><circle cx="16" cy="16" r="14" fill="url(#gGlobe)"/>
<g fill="#b9dcfb"><path d="M17 2.1C12 1.6 6 5 3.2 10.4l.6 2.4 2.8-.4L8 9.6l2.4-.2L12 6.6l2.2.6 1-2.4 2.6-.4z" opacity=".9"/>
<path d="M6.5 18.5C7.5 16.3 10.5 15.8 12.6 16.9L15.5 18.4 20.6 21.3C21.2 23.4 19.2 24.6 18.1 26.1L15.6 29.4C12.2 29.9 9.1 27.6 8 24.6Z" fill="#a9d3fa"/>
<path d="M24.4 9.4c1.6-1.4 3.6-.6 4.4.4 1.2 2.6 1.6 6 1 9.2-1.6.6-4.6.2-5.8-1.6-1.4-2.4-1.4-6 .4-8z" fill="#c3e1fc"/>
<path d="M2.3 13.2l2.4.6.4 1.6-2.8-.4z" opacity=".8"/></g></svg><span><b style="letter-spacing:.3px">Network</b><br>Settings</span></div>
<div class="it" style="left:277px;top:34px"><svg viewBox="0 0 32 32" ><rect x="0" y="2" width="32" height="28" fill="#cdd1d3"/><rect x="0" y="2" width="32" height="5" fill="#232629"/>
<rect x="2" y="4" width="3" height="1.2" fill="#fff"/><rect x="27" y="4" width="3" height="1.2" fill="#3daee9"/>
<rect x="3" y="10" width="26" height="15" fill="#f1f1f1"/><path d="M24 11h5v14h-1.5z" fill="#dcdede"/>
<rect x="23" y="11" width="1.1" height="10.5" fill="#2a2e32"/><rect x="23" y="21.5" width="1.1" height="2.5" fill="#3d8fe0"/>
<rect x="0" y="28" width="32" height="2" fill="#232629"/></svg><span>Input Devices</span></div>
<div class="it" style="left:370px;top:34px"><svg viewBox="0 0 32 32" ><rect x="3" y="12" width="26" height="13" rx="1" fill="url(#gGray)"/>
<rect x="3" y="12.4" width="1.7" height="9.6" fill="#3b424a"/><rect x="27.3" y="12.4" width="1.7" height="9.6" fill="#3b424a"/>
<rect x="6.8" y="4.6" width="18.4" height="14.6" fill="#3b424a"/>
<rect x="8" y="4.4" width="16" height="9" fill="url(#gPaper)"/>
<path d="M14.8 16.8l1.6-1.6" stroke="#aeb4b9" stroke-width=".8"/>
<rect x="8" y="24" width="16" height="4" fill="url(#gRainbow)"/>
<rect x="3" y="25.3" width="3.6" height="1" fill="#4a5157"/><rect x="25.4" y="25.3" width="3.6" height="1" fill="#4a5157"/>
<rect x="27.4" y="20.6" width="1.2" height="1.6" fill="#27ae60"/></svg><span>Printers</span></div>
<div class="it" style="left:463px;top:34px"><svg viewBox="0 0 32 32" ><circle cx="16" cy="16" r="14" fill="url(#gBlue)"/>
<path d="M11.4 12.4l8.4 7-4.2 4V8.6l4.2 4-8.4 7" fill="none" stroke="#d4ebfd" stroke-width="1.05" stroke-linejoin="miter"/></svg><span><b style="letter-spacing:.33px">Bluetooth</b></span></div>
<div class="it" style="left:556px;top:34px"><svg viewBox="0 0 32 32" ><circle cx="16" cy="16" r="14" fill="url(#gGreen)"/>
<path d="M16.3 9L30 21A14 14 0 0 1 19 29.7L14.8 23.3z" fill="#3f8f0d" opacity=".24"/>
<path d="M16.4 8.8L12.2 17h3.2l-.700 6.6 4.7-9h-3.3z" fill="#e0f7c8"/></svg><span>Power<br><b style="letter-spacing:.2px">Management</b></span></div>
<div class="it" style="left:649px;top:34px"><svg viewBox="0 0 32 32" ><rect x="24" y="5.5" width="3.2" height="1.6" fill="#2a2e32"/>
<rect x="3" y="6.8" width="26" height="18.2" fill="#d3d7d9"/><rect x="3" y="6.8" width="26" height=".9" fill="#2a2e32"/><rect x="3" y="24" width="26" height="1" fill="#2a2e32"/>
<circle cx="12.3" cy="15.9" r="7" fill="#33383d"/><circle cx="12.3" cy="15.9" r="6" fill="none" stroke="#596068" stroke-width=".8"/>
<circle cx="12.3" cy="15.9" r="4.5" fill="#1f8fe3"/><circle cx="12.3" cy="15.9" r="1.7" fill="#23282c"/>
<path d="M9.6 13.2l1.4 1" stroke="#9fd2f7" stroke-width=".9"/>
<circle cx="24.6" cy="10" r=".8" fill="#e8336d"/><rect x="26.2" y="11.4" width="2.8" height="8.6" rx=".5" fill="#33383d"/></svg><span>Digital<br><b style="letter-spacing:-.35px">Camera</b></span></div>
<div class="it" style="left:742px;top:34px"><svg viewBox="0 0 32 32" ><path d="M2.6 2.4h27v26.8h-27V11.6l.9-.7V8.3l-.9-.7z" fill="#8ec161"/>
<rect x="5" y="5" width="22" height="20.8" fill="url(#gBlue)"/>
<path d="M27.8 6.4c1.2 1 1.2 2 0 3s-1.2 2 0 3 1.2 2 0 3" fill="none" stroke="#33421f" stroke-width=".8"/>
<rect x="6" y="27" width="9" height=".9" fill="#3a5a1c"/><rect x="22.5" y="27" width="3.5" height=".9" fill="#3a5a1c"/>
<circle cx="16" cy="15.5" r="9" fill="none" stroke="#e4f2fe" stroke-width="1.1"/>
<circle cx="16" cy="10.9" r="1.25" fill="#eef7fe"/><rect x="15" y="13.2" width="2" height="7.6" fill="url(#gPale)"/></svg><span>Driver<br>Manager</span></div>
<div class="it" style="left:835px;top:34px"><svg viewBox="0 0 32 32" ><rect x="8" y="2" width="16" height="28" rx=".6" fill="#25292c"/><rect x="9" y="4.5" width="14" height="22.6" fill="url(#gPhone)"/>
<rect x="12.5" y="2.9" width="7" height=".7" fill="#5b6167"/>
<path d="M16.6 11.7l4 3.5-4 3.5" fill="none" stroke="#2a2e32" stroke-width="1.3"/>
<circle cx="14.1" cy="12.7" r=".7" fill="#2a2e32"/><circle cx="12.9" cy="15.7" r="1" fill="#2a2e32"/><circle cx="15.4" cy="19.3" r="1.5" fill="#2a2e32"/></svg><span><b style="letter-spacing:-.5px">KDE Connect</b></span></div>
<div class="it" style="left:-2px;top:129px"><svg viewBox="0 0 32 32" ><rect x="9" y="2" width="14" height="10.5" fill="#d3d7d9"/>
<rect x="10.5" y="4" width="4.6" height="4" fill="#e9a227"/><rect x="17" y="4" width="4.6" height="4" fill="#e9a227"/>
<rect x="10.5" y="4" width=".9" height="4" fill="#8a5a17"/><rect x="14.2" y="4" width=".9" height="4" fill="#8a5a17"/><rect x="17" y="4" width=".9" height="4" fill="#8a5a17"/><rect x="20.7" y="4" width=".9" height="4" fill="#8a5a17"/>
<rect x="7" y="12" width="18" height="18" fill="url(#gBlue)"/>
<path d="M15.4 17.2l3 3.1-3 3.1" fill="none" stroke="#e8f4fe" stroke-width="1.2"/>
<rect x="12.8" y="16.6" width="1" height="1" fill="#cfe6fb"/><rect x="11.4" y="20" width="1.4" height="1.4" fill="#b7d9f9"/><rect x="13.6" y="23" width="1.7" height="1.7" fill="#9fccf7"/></svg><span>Removable<br><b style="letter-spacing:-.3px">Devices</b></span></div>
</div>
<div class="grp" style="top:628px;height:130px"><i></i><h3>Advanced</h3>
<div class="it" style="left:-2px;top:34px"><svg viewBox="0 0 32 32" ><circle cx="16" cy="16" r="14" fill="url(#gGray)"/>
<path d="M11 17.5L22 14.5 29.5 20A14 14 0 0 1 20 29.4z" fill="#b3b9bd" opacity=".5"/>
<circle cx="10.9" cy="16" r="1.75" fill="#2f3337"/><circle cx="15.9" cy="16" r="1.75" fill="#2f3337"/><circle cx="20.9" cy="16" r="1.75" fill="#2f3337"/></svg><span></span></div>
<div class="it" style="left:91px;top:34px"><svg viewBox="0 0 32 32" ><rect x="0" y="2" width="32" height="23" fill="#2a2e32"/>
<rect x="1" y="3" width="30" height="18.6" fill="#45b1ea"/>
<path d="M9 9l14.5 0L31 16.5v5.1H18.2L9 16.6z" fill="#2c7fb3" opacity=".55"/>
<rect x="9" y="9" width="14.5" height="3.2" fill="#e4e6e7"/><rect x="9" y="13.4" width="14.5" height="3.2" fill="#e4e6e7"/>
<rect x="10.3" y="10.1" width="1" height="1" fill="#4a5054"/><rect x="10.3" y="14.5" width="1" height="1" fill="#4a5054"/><rect x="12.3" y="14.5" width="1" height="1" fill="#4a5054"/><rect x="14.3" y="14.5" width="1" height="1" fill="#4a5054"/>
<rect x="13.5" y="25" width="5.5" height="4" fill="#d5dadc"/><rect x="10" y="29" width="12" height="1" fill="#a9b1b5"/></svg><span></span></div>
<div class="it sel" style="left:184px;top:34px"><svg viewBox="0 0 32 32" ><circle cx="16" cy="16" r="11.5" fill="none" stroke="#fff" stroke-width="1.1"/>
<circle cx="16" cy="10.2" r="1.2" fill="#fff"/><rect x="15.1" y="13" width="1.8" height="9.6" fill="#fff"/></svg><span></span></div>
</div></div><div id="bot"></div>
<svg class="abs" style="left:978px;top:70px;width:12px;height:8px" viewBox="0 0 12 8"><path d="M1.3 6.8L6 2l4.7 4.8" fill="none" stroke="#6e6e6e" stroke-width="1"/></svg>
<div class="abs" style="left:979px;top:84px;width:10px;height:662px;border-radius:5px;background:#b9b9b7"></div>
<div class="abs" style="left:979px;top:84px;width:10px;height:613px;border-radius:5px;background:#2c72c7"></div>
<svg class="abs" style="left:978px;top:753px;width:12px;height:8px" viewBox="0 0 12 8"><path d="M1.3 1.2L6 6l4.7-4.8" fill="none" stroke="#333" stroke-width="1"/></svg>
</div><div id="panel">
<!-- launcher -->
<svg class="abs" style="left:11px;top:12px;width:34px;height:34px" viewBox="0 0 34 34"><circle cx="10" cy="3.6" r="1.5" fill="#f08b73"/><circle cx="6" cy="13.8" r="2.4" fill="#5ec321"/><circle cx="13.6" cy="24.6" r="3.4" fill="#1d8df0"/><path d="M19.5 3l8.3 7.3-8.3 7.3" fill="none" stroke="#5b5e60" stroke-width="3.2"/></svg>
<!-- firefox -->
<svg class="abs" style="left:61px;top:11.7px;width:30px;height:30px" viewBox="0 0 30 30"><defs><linearGradient id="ffg" x1=".3" y1="0" x2=".6" y2="1"><stop offset="0" stop-color="#55bdf2"/><stop offset=".45" stop-color="#1e7fd0"/><stop offset="1" stop-color="#15327e"/></linearGradient><linearGradient id="ffo" x1="0" y1="0" x2="0" y2="1"><stop offset="0" stop-color="#f18d1f"/><stop offset=".5" stop-color="#e9661d"/><stop offset="1" stop-color="#e2501e"/></linearGradient><radialGradient id="ffy" cx="27.5" cy="10" r="13" gradientUnits="userSpaceOnUse"><stop offset="0" stop-color="#fff04a"/><stop offset=".4" stop-color="#fcd21d"/><stop offset=".8" stop-color="#f6a01c" stop-opacity=".7"/><stop offset="1" stop-color="#ee7a1c" stop-opacity="0"/></radialGradient></defs>
<circle cx="15.5" cy="12.3" r="11.7" fill="url(#ffg)"/>
<path id="fox" d="M3 3.5C3.8 4.8 4.6 5.6 5.4 5.9 6.5 5.5 7.6 5.3 8.7 5.4 9.8 5.2 11 4.9 12 4.5 11.3 5.4 11 6.3 11 7.3 12 7.8 13.2 8.4 14.3 9.1 14.2 9.9 13.9 10.5 13.4 11 12.6 11.3 11.8 11.5 11 11.5 11.4 12.1 11.6 12.7 11.5 13.4 10.8 13.8 10.1 14.2 9.6 14.8 9.5 15.3 9.7 15.8 10 16.2 10.7 16.9 11.5 17.4 12.4 17.6 14.3 17.9 16.2 17.2 18 17.6 17.9 18.2 17.6 18.7 17.1 19 15.6 19.7 14 20.1 12.4 20.4 13.5 21.4 14.8 22.1 16.2 22.3 17.9 22.4 19.5 22.1 20.9 21.3 22.4 20.2 23.3 18.5 23.7 16.6 24.2 15.1 24.6 13.6 24.6 12 24.3 9.5 23.3 7.3 21.8 5.4 21.6 4.6 21.6 3.8 21.8 3 23.6 3.2 25.2 3.8 26.5 4.9 27.9 6.6 28.9 8.7 29.3 11 29.6 12.2 29.8 13.5 29.8 14.8 29.8 17.1 29.3 19.3 28.4 21.3 27.5 23.3 26.2 25.1 24.6 26.5 22.5 28.2 19.9 29.3 17.1 29.5 14.6 29.7 12.1 29.3 10 28.4 7 27.3 4.6 25.5 3 23.2 1.5 21.3.5 19 .2 16.6 0 14.4.1 12.2.7 10 1 8.9 1.5 7.8 2.1 6.8 2.2 5.7 2.5 4.6 3 3.5Z" fill="url(#ffo)"/>
<path d="M21.8 3C23.6 3.2 25.2 3.8 26.5 4.9 27.9 6.6 28.9 8.7 29.3 11 29.6 12.2 29.8 13.5 29.8 14.8 29.8 17.1 29.3 19.3 28.4 21.3L23 22 20.9 21.3C22.4 20.2 23.3 18.5 23.7 16.6 24.2 15.1 24.6 13.6 24.6 12 24.3 9.5 23.3 7.3 21.8 5.4 21.6 4.6 21.6 3.8 21.8 3Z" fill="url(#ffy)"/>
<path d="M11.3 9.4l2.6.3-.8 1.1-2-.2z" fill="#fbe9d8"/><path d="M22 5.8c1.5 1.7 2.5 3.8 2.8 6" fill="none" stroke="#fff6c8" stroke-width="1" opacity=".85"/></svg>
<!-- task: system settings -->
<div class="abs" style="left:99px;top:6px;width:44px;height:42px;border-radius:22px 22px 4px 4px/30px 30px 4px 4px;background:radial-gradient(ellipse 48% 40% at 50% 100%,rgba(170,170,170,.75),rgba(90,90,90,.4) 55%,rgba(40,40,40,.18) 80%,rgba(0,0,0,0) 100%),radial-gradient(ellipse 50% 100% at 50% 100%,rgba(110,110,110,.4),rgba(70,70,70,.22) 60%,rgba(0,0,0,0) 100%)"></div>
<div class="abs" style="left:100px;top:47px;width:42px;height:1.7px;border-radius:50%;background:linear-gradient(90deg,rgba(255,255,255,0),#dcdcdc 20%,#fff 50%,#dcdcdc 80%,rgba(255,255,255,0))"></div>
<svg class="abs" style="left:107.5px;top:13.2px;width:26.8px;height:26.6px" viewBox="0 0 26.8 26.6"><defs><linearGradient id="tk" x1="0" y1="0" x2="1" y2="1"><stop offset="0" stop-color="#3d4247"/><stop offset="1" stop-color="#26292d"/></linearGradient></defs><rect x="0" y="0" width="26.8" height="26.6" fill="url(#tk)"/><rect x="0" y="0" width="26.8" height="1.2" fill="#53585d"/><path d="M18.9 10.4l7.9 7.9v8.3h-7.5l-8.5-9.5z" fill="#1d2023" opacity=".5"/><rect x="3.5" y="9.7" width="15.4" height="1.5" fill="#3daee9"/><rect x="18.9" y="10" width="4.4" height=".9" fill="#5a6065"/><circle cx="18.9" cy="10.4" r="1.9" fill="#fafafa"/><rect x="3.5" y="16.4" width="7.3" height="1.5" fill="#3daee9"/><rect x="10.8" y="16.7" width="12.5" height=".9" fill="#5a6065"/><circle cx="10.8" cy="17.1" r="1.9" fill="#fafafa"/></svg>
<!-- tray -->
<svg class="abs" style="left:948.7px;top:13.6px;width:26.7px;height:27px" viewBox="0 0 26.7 27"><defs><linearGradient id="tb1" x1="0" y1="0" x2="0" y2="1"><stop offset="0" stop-color="#3f90e2"/><stop offset="1" stop-color="#2c74c8"/></linearGradient></defs><rect width="26.7" height="27" fill="url(#tb1)"/><path d="M17.3 13.6L26.7 22v5H15.5l-5.2-6.4z" fill="#1f5596" opacity=".5"/><path d="M10.3 7.4l7 6.2-7 6" fill="none" stroke="#27323d" stroke-width="1.3"/></svg>
<svg class="abs" style="left:993px;top:15px;width:26px;height:24px" viewBox="0 0 26 24"><defs><linearGradient id="sp1" x1="0" y1="0" x2="0" y2="1"><stop offset="0" stop-color="#fff"/><stop offset="1" stop-color="#b9b9b9"/></linearGradient></defs><path d="M1.2 9h3.6L11 4.8v14.4L4.8 15H1.2z" fill="url(#sp1)"/><path d="M14.3 5.7c2.6 3.8 2.6 8.8 0 12.6" fill="none" stroke="url(#sp1)" stroke-width="2.2" stroke-linecap="round"/><path d="M18.6 2.2c4.6 5.8 4.6 13.8 0 19.6" fill="none" stroke="url(#sp1)" stroke-width="2.5" stroke-linecap="round"/></svg>
<svg class="abs" style="left:1038.8px;top:21.6px;width:18.5px;height:11px" viewBox="0 0 18.5 11"><rect width="18.5" height="11" rx=".8" fill="#c9d3cf"/><g fill="#46504d"><path d="M1 1.6h1.6v1.7H1zM3.3 1.6h1.6v1.7H3.3zM5.6 1.6h1.6v1.7H5.6zM7.9 1.6h1.6v1.7H7.9zM10.2 1.6h1.6v1.7h-1.6zM12.5 1.6h1.6v1.7h-1.6zM14.8 1.6h2.7v1.7h-2.7zM1 4.1h2.4v1.7H1zM4.1 4.1h1.6v1.7H4.1zM6.4 4.1H8v1.7H6.4zM8.7 4.1h1.6v1.7H8.7zM11 4.1h1.6v1.7H11zM13.3 4.1h1.6v1.7h-1.6zM15.6 4.1h1.9v1.7h-1.9zM1 6.6h1.6v1.7H1zM3.3 6.6h1.6v1.7H3.3zM5.6 6.6h6.3v1.7H5.6zM12.6 6.6h1.6v1.7h-1.6zM14.9 6.6h2.6v1.7h-2.6z"/></g><rect y="9.4" width="18.5" height="1.6" rx=".8" fill="#e4eae8"/></svg>
<svg class="abs" style="left:1065.5px;top:18.8px;width:17px;height:19px" viewBox="0 0 17 19"><rect x=".5" y=".5" width="16" height="15" rx="2.3" fill="#bdbdbd" stroke="#e6e6e6" stroke-width="1"/><path d="M3.2 13.5V6.3h1.7V4.5h1.8V3h3.6v1.5h1.8v1.8h1.7v7.2z" fill="#3c3c3c"/><path d="M5.6 15.5v-5.2h5.8v5.2" fill="#9a9a9a"/><path d="M6.6 10.3v2.6M8.5 10.3v2.6M10.4 10.3v2.6" stroke="#dedede" stroke-width=".8"/><rect x="7.2" y="12.8" width="2.6" height="5.7" rx="1" fill="#f2f2f2"/></svg>
<svg class="abs" style="left:1094px;top:24px;width:12px;height:6.2px" viewBox="0 0 12 6.2"><path d="M6 0l6 6.2H0z" fill="#f2f2f2"/></svg>
<div class="abs" id="clk" style="left:1105px;top:8.5px;width:100px;text-align:center;color:#f2f2f2;font-size:17.6px;line-height:21px;white-space:nowrap;-webkit-text-stroke:0">23:47<br><span style="font-size:16px;letter-spacing:.05px">2016-10-12</span></div>
<svg class="abs" style="left:1208px;top:13px;width:28px;height:28px" viewBox="0 0 28 28"><circle cx="14.2" cy="14.2" r="12.4" fill="#070707" stroke="#4e4e4e" stroke-width="1.1"/><text x="14.2" y="21.2" text-anchor="middle" font-family="Liberation Serif,serif" font-weight="bold" font-size="20.5" fill="#d4d4d4">i</text></svg>
<svg class="abs" style="left:1252px;top:22.5px;width:12px;height:10px" viewBox="0 0 12 10"><path d="M0 1h12M0 5h12M0 9h12" stroke="#a2a2a2" stroke-width="1.7"/></svg>
</div>
<svg id="cur" class="abs" style="left:636px;top:829px;width:18px;height:26px;filter:drop-shadow(0 1px 1px rgba(0,0,0,.25))" viewBox="636 829 18 26"><path d="M639 832.3V847.8H643.4L646.5 851L647.3 845.8L649.8 843.5Z" fill="#4a4a4a" stroke="#fff" stroke-width="2.3" stroke-linejoin="round" paint-order="stroke"/></svg>

</body>
</html>
